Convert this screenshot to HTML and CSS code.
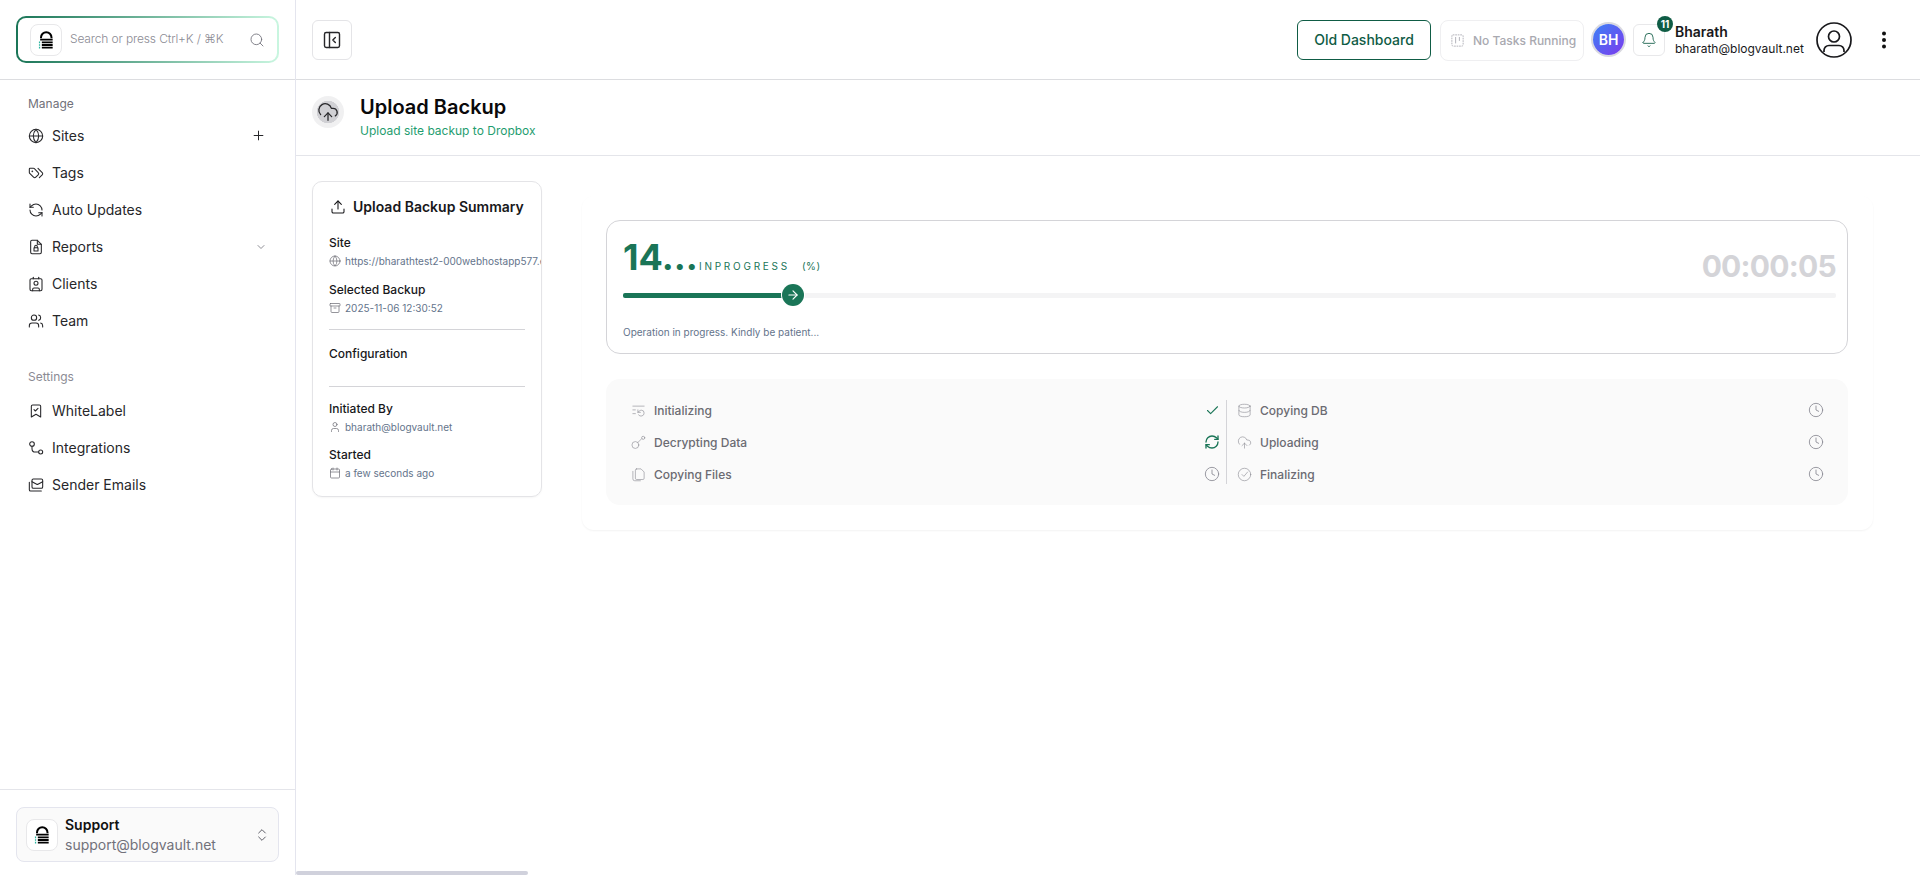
FILE: index.html
```html
<!DOCTYPE html>
<html lang="en">
<head>
<meta charset="utf-8">
<title>Upload Backup</title>
<link rel="stylesheet" href="styles.css">
</head>
<body>
<svg class="sprite" aria-hidden="true">
  <symbol id="logo" viewBox="0 0 24 24">
    <path d="M6 10V9a6.3 6.3 0 0 1 12.600 0v1" fill="none" stroke="#000" stroke-width="2.400"/>
    <path d="M5 11.500h15M7 14.800h13M7 18h13M7 21.200h13" fill="none" stroke="#000" stroke-width="2.200"/>
    <path d="M3.500 14.800h1.500M3.500 18h1.500M3.500 21.200h1.500" fill="none" stroke="#2bb5a0" stroke-width="2"/>
  </symbol>
  <symbol id="clock" viewBox="0 0 24 24"><circle cx="12" cy="12" r="10"/><path d="M12 6v6l4 2"/></symbol>
</svg>
<div class="app">
  <aside class="sidebar">
    <div class="side-top">
      <div class="search">
        <span class="logo-box"><svg class="logo" width="20" height="20"><use href="#logo"/></svg></span>
        <span class="search-text">Search or press Ctrl+K / ⌘K</span>
        <svg class="ic muted" viewBox="0 0 24 24"><path d="m21 21-4.340-4.340"/><circle cx="11" cy="11" r="8"/></svg>
      </div>
    </div>
    <nav class="side-nav">
      <div class="nav-title">Manage</div>
      <a class="nav-item"><svg class="ic" viewBox="0 0 24 24"><circle cx="12" cy="12" r="10"/><path d="M12 2a14.500 14.500 0 0 0 0 20 14.500 14.500 0 0 0 0-20"/><path d="M2 12h20"/></svg><span>Sites</span><svg class="ic ic-end plus" viewBox="0 0 24 24"><path d="M5 12h14M12 5v14"/></svg></a>
      <a class="nav-item"><svg class="ic" viewBox="0 0 24 24"><path d="m15 5 6.300 6.300a2.400 2.400 0 0 1 0 3.400L17 19"/><path d="M9.586 5.586A2 2 0 0 0 8.172 5H3a1 1 0 0 0-1 1v5.172a2 2 0 0 0 .586 1.414L8.290 18.290a2.426 2.426 0 0 0 3.420 0l3.580-3.580a2.426 2.426 0 0 0 0-3.420z"/><circle cx="6.500" cy="9.500" r=".5"/></svg><span>Tags</span></a>
      <a class="nav-item"><svg class="ic" viewBox="0 0 24 24"><path d="M21 12a9 9 0 0 0-9-9 9.750 9.750 0 0 0-6.740 2.740L3 8"/><path d="M3 3v5h5"/><path d="M3 12a9 9 0 0 0 9 9 9.750 9.750 0 0 0 6.740-2.740L21 16"/><path d="M16 16h5v5"/></svg><span>Auto Updates</span></a>
      <a class="nav-item"><svg class="ic" viewBox="0 0 24 24"><path d="M14 2H6a2 2 0 0 0-2 2v16a2 2 0 0 0 2 2h12a2 2 0 0 0 2-2V8z"/><path d="M14 2v6h6"/><rect x="9" y="13" width="6" height="5"/><path d="M10 13v-1.500a2 2 0 0 1 4 0V13"/></svg><span>Reports</span><svg class="ic ic-end chev" viewBox="0 0 24 24"><path d="m6 9 6 6 6-6"/></svg></a>
      <a class="nav-item"><svg class="ic" viewBox="0 0 24 24"><path d="M16 2v2"/><path d="M7 22v-2a2 2 0 0 1 2-2h6a2 2 0 0 1 2 2v2"/><path d="M8 2v2"/><circle cx="12" cy="11" r="3"/><rect x="3" y="4" width="18" height="18" rx="2"/></svg><span>Clients</span></a>
      <a class="nav-item"><svg class="ic" viewBox="0 0 24 24"><path d="M16 21v-2a4 4 0 0 0-4-4H6a4 4 0 0 0-4 4v2"/><circle cx="9" cy="7" r="4"/><path d="M22 21v-2a4 4 0 0 0-3-3.870"/><path d="M16 3.130a4 4 0 0 1 0 7.750"/></svg><span>Team</span></a>
      <div class="nav-title nav-title-2">Settings</div>
      <a class="nav-item"><svg class="ic" viewBox="0 0 24 24"><path d="m19 21-7-4-7 4V5a2 2 0 0 1 2-2h10a2 2 0 0 1 2 2Z"/><path d="m9 10 2 2 4-4"/></svg><span>WhiteLabel</span></a>
      <a class="nav-item"><svg class="ic" viewBox="0 0 24 24"><circle cx="6" cy="6" r="3.500"/><circle cx="19" cy="18" r="3"/><path d="M6 9.500V13a5 5 0 0 0 5 5h5"/></svg><span>Integrations</span></a>
      <a class="nav-item"><svg class="ic" viewBox="0 0 24 24"><rect x="6" y="3" width="16" height="14" rx="2"/><path d="m22 7-7.100 3.780c-.57.3-1.230.3-1.800 0L6 7"/><path d="M2 8v11c0 1.100.9 2 2 2h16"/></svg><span>Sender Emails</span></a>
    </nav>
    <div class="side-foot">
      <div class="support">
        <span class="logo-box"><svg class="logo" width="20" height="20"><use href="#logo"/></svg></span>
        <div class="support-text"><strong>Support</strong><span>support@blogvault.net</span></div>
        <svg class="ic ic-end updown" viewBox="0 0 24 24"><path d="m7 15 5 5 5-5"/><path d="m7 9 5-5 5 5"/></svg>
      </div>
    </div>
  </aside>

  <main class="main">
    <header class="topbar">
      <button class="toggle"><svg class="ic ic-20" viewBox="0 0 24 24"><rect x="3" y="3" width="18" height="18" rx="2"/><path d="M9 3v18"/><path d="m16 15-3-3 3-3"/></svg></button>
      <div class="top-right">
        <button class="old-dash">Old Dashboard</button>
        <div class="tasks"><svg class="ic ic-15 dash" viewBox="0 0 24 24"><rect x="3" y="3" width="18" height="18" rx="2" stroke-dasharray="1.500 2.500"/><path d="M9 7v9M15 7v5"/></svg><span>No Tasks Running</span></div>
        <div class="avatar">BH</div>
        <div class="bell"><svg class="ic bell-ic" viewBox="0 0 24 24"><path d="M10.268 21a2 2 0 0 0 3.464 0"/><path d="M3.262 15.326A1 1 0 0 0 4 17h16a1 1 0 0 0 .74-1.673C19.410 13.956 18 12.499 18 8A6 6 0 0 0 6 8c0 4.499-1.411 5.956-2.738 7.326"/></svg><span class="badge">11</span></div>
        <div class="who"><strong>Bharath</strong><span>bharath@blogvault.net</span></div>
        <svg class="profile" viewBox="0 0 36 36"><circle cx="18" cy="18" r="17"/><circle cx="18" cy="14.500" r="5.500"/><path d="M8 30v-1.500a5 5 0 0 1 5-5h10a5 5 0 0 1 5 5V30"/></svg>
        <svg class="kebab" viewBox="0 0 4 18"><circle cx="2" cy="2.500" r="2"/><circle cx="2" cy="9" r="2"/><circle cx="2" cy="15.500" r="2"/></svg>
      </div>
    </header>

    <section class="page-head">
      <span class="head-ic"><svg class="ic ic-22 dark" viewBox="0 0 24 24"><path d="M12 13v8"/><path d="M4 14.899A7 7 0 1 1 15.710 8h1.790a4.500 4.500 0 0 1 2.500 8.242"/><path d="m8 17 4-4 4 4"/></svg></span>
      <div>
        <h1>Upload Backup</h1>
        <p>Upload site backup to Dropbox</p>
      </div>
    </section>

    <section class="content">
      <aside class="summary">
        <h2><svg class="ic" viewBox="0 0 24 24"><path d="M21 15v4a2 2 0 0 1-2 2H5a2 2 0 0 1-2-2v-4"/><path d="M17 8l-5-5-5 5"/><path d="M12 3v12"/></svg>Upload Backup Summary</h2>
        <div class="field">
          <h3>Site</h3>
          <p><svg class="ic ic-12" viewBox="0 0 24 24"><circle cx="12" cy="12" r="10"/><path d="M12 2a14.500 14.500 0 0 0 0 20 14.500 14.500 0 0 0 0-20"/><path d="M2 12h20"/></svg>https://bharathtest2-000webhostapp577.e</p>
        </div>
        <div class="field field-b">
          <h3>Selected Backup</h3>
          <p><svg class="ic ic-12" viewBox="0 0 24 24"><rect x="2" y="3" width="20" height="5" rx="1"/><path d="M4 8v11a2 2 0 0 0 2 2h12a2 2 0 0 0 2-2V8"/><path d="M10 12h4"/></svg>2025-11-06 12:30:52</p>
        </div>
        <hr class="rule rule-1">
        <h3 class="config">Configuration</h3>
        <hr class="rule rule-2">
        <div class="field">
          <h3>Initiated By</h3>
          <p><svg class="ic ic-12" viewBox="0 0 24 24"><path d="M19 21v-2a4 4 0 0 0-4-4H9a4 4 0 0 0-4 4v2"/><circle cx="12" cy="7" r="4"/></svg>bharath@blogvault.net</p>
        </div>
        <div class="field field-c">
          <h3>Started</h3>
          <p><svg class="ic ic-12" viewBox="0 0 24 24"><path d="M8 2v4"/><path d="M16 2v4"/><rect x="3" y="4" width="18" height="18" rx="2"/><path d="M3 10h18"/></svg>a few seconds ago</p>
        </div>
      </aside>

      <div class="panel">
        <div class="progress-card">
          <div class="prog-top">
            <span class="pct">14...</span>
            <span class="state">INPROGRESS</span>
            <span class="unit">(%)</span>
            <span class="timer">00:00:05</span>
          </div>
          <div class="track">
            <div class="fill" style="width:170px"></div>
            <span class="knob"><svg class="ic ic-14 white" viewBox="0 0 24 24"><path d="M5 12h14"/><path d="m12 5 7 7-7 7"/></svg></span>
          </div>
          <p class="note">Operation in progress. Kindly be patient...</p>
        </div>
        <div class="steps">
          <ul class="col col-l">
            <li><svg class="ic ic-15" viewBox="0 0 24 24"><path d="M21 5H3"/><path d="M7 11H3"/><path d="M7 17H3"/><path d="M12 19a5 5 0 0 0 9-3 4.500 4.500 0 0 0-4.500-4.500c-1.330 0-2.540.54-3.410 1.410L11 15"/><path d="M11 11v4h4"/></svg><span>Initializing</span><svg class="ic ic-15 ok" viewBox="0 0 24 24"><path d="M20 6 9 17l-5-5"/></svg></li>
            <li><svg class="ic ic-15" viewBox="0 0 24 24"><circle cx="7" cy="16" r="5.500"/><path d="m11 12 6-6"/><circle cx="19.500" cy="4.500" r="2.500"/></svg><span>Decrypting Data</span><svg class="ic ic-16 ok spin" viewBox="0 0 24 24"><path d="M3 12a9 9 0 0 1 9-9 9.750 9.750 0 0 1 6.740 2.740L21 8"/><path d="M21 3v5h-5"/><path d="M21 12a9 9 0 0 1-9 9 9.750 9.750 0 0 1-6.740-2.740L3 16"/><path d="M8 16H3v5"/></svg></li>
            <li><svg class="ic ic-15" viewBox="0 0 24 24"><path d="M9 3h7l5 5v10a2 2 0 0 1-2 2H9a2 2 0 0 1-2-2V5a2 2 0 0 1 2-2z"/><path d="M3 7v12a3 3 0 0 0 3 3h9"/></svg><span>Copying Files</span><svg class="ic ic-16 soft"><use href="#clock"/></svg></li>
          </ul>
          <ul class="col col-r">
            <li><svg class="ic ic-15" viewBox="0 0 24 24"><ellipse cx="12" cy="5" rx="9" ry="3"/><path d="M3 5v14a9 3 0 0 0 18 0V5"/><path d="M3 12a9 3 0 0 0 18 0"/></svg><span>Copying DB</span><svg class="ic ic-16 soft"><use href="#clock"/></svg></li>
            <li><svg class="ic ic-15" viewBox="0 0 24 24"><path d="M12 13v8"/><path d="M4 14.899A7 7 0 1 1 15.710 8h1.790a4.500 4.500 0 0 1 2.500 8.242"/><path d="m8 17 4-4 4 4"/></svg><span>Uploading</span><svg class="ic ic-16 soft"><use href="#clock"/></svg></li>
            <li><svg class="ic ic-15" viewBox="0 0 24 24"><circle cx="12" cy="12" r="10"/><path d="m8 12 3 3 6-7"/></svg><span>Finalizing</span><svg class="ic ic-16 soft"><use href="#clock"/></svg></li>
          </ul>
        </div>
      </div>
    </section>
    <div class="hscroll"></div>
  </main>
</div>
</body>
</html>
```

FILE: styles.css
```css
* { box-sizing: border-box; }
html, body { margin: 0; height: 100%; overflow: hidden; }
body { font-family: Inter, "Liberation Sans", sans-serif; color: #18181b; background: #fff; }
.sprite { position: absolute; width: 0; height: 0; }
h1, h2, h3, p, ul { margin: 0; padding: 0; }
ul { list-style: none; }
button { font-family: inherit; cursor: pointer; }

.ic { width: 16px; height: 16px; flex: none; fill: none; stroke: currentColor; stroke-width: 1.6; stroke-linecap: round; stroke-linejoin: round; }
.ic-12 { width: 12px; height: 12px; stroke-width: 1.5; }
.ic-14 { width: 14px; height: 14px; stroke-width: 2; }
.ic-15 { width: 15px; height: 15px; stroke-width: 1.3; }
.ic-16 { width: 16px; height: 16px; }
.ic-20 { width: 20px; height: 20px; stroke-width: 1.7; }
.ic-22 { width: 22px; height: 22px; }
.logo { display: block; }

.app { display: flex; height: 875px; }

/* Sidebar */
.sidebar { width: 296px; flex: none; display: flex; flex-direction: column; border-right: 1px solid #e4e5ee; }
.side-top { height: 80px; padding: 16px 16px 0; border-bottom: 1px solid #dcdde0; }
.search { height: 47px; width: 263px; display: flex; align-items: center; gap: 8px; padding: 0 12px; border: 2px solid transparent; border-radius: 10px; background: linear-gradient(#fff, #fff) padding-box, linear-gradient(90deg, #1a7557, #c9f6e0) border-box; }
.logo-box { width: 32px; height: 32px; flex: none; display: flex; align-items: center; justify-content: center; border: 1px solid #e8e8ea; border-radius: 8px; background: #fff; }
.search-text { flex: 1; padding-bottom: 2px; font-size: 12px; letter-spacing: -.14px; color: #8b8b94; white-space: nowrap; font-weight: 300; }
.muted { color: #71717a; stroke-width: 1.3; }
.side-nav { flex: 1; padding: 15px 0 0 28px; }
.nav-title { height: 18px; line-height: 18px; font-size: 12px; color: #71717a; margin-bottom: 4px; }
.nav-title-2 { margin-top: 29px; margin-bottom: 6px; color: #8b8b94; }
.nav-item { height: 37px; display: flex; align-items: center; gap: 8px; font-size: 14px; color: #27272a; padding-right: 29px; }
.nav-item .ic { color: #27272a; }
.ic-end { margin-left: auto; }
.nav-item .plus { width: 15px; height: 15px; }
.nav-item .chev { width: 12px; height: 12px; color: #71717a; margin-right: -1px; }
.side-foot { height: 86px; border-top: 1px solid #e4e5ea; padding: 17px 16px 0; }
.support { height: 55px; display: flex; align-items: center; gap: 7px; padding: 0 9px; border: 1px solid #e4e5ee; border-radius: 8px; background: #fafafa; }
.support-text { display: flex; flex-direction: column; font-size: 14px; line-height: 20px; }
.support-text strong { font-size: 14px; font-weight: 600; color: #111; }
.support-text span { color: #71717a; }
.updown { color: #52525b; stroke-width: 1.4; margin-right: -1px; }

/* Main */
.main { flex: 1; min-width: 0; display: flex; flex-direction: column; position: relative; }
.topbar { height: 80px; flex: none; display: flex; align-items: center; padding: 0 0 0 16px; border-bottom: 1px solid #dcdde0; }
.toggle { width: 40px; height: 40px; display: flex; align-items: center; justify-content: center; padding: 0; background: #fff; color: #27272a; border: 1px solid #e4e4e7; border-radius: 6px; }
.top-right { margin-left: auto; display: flex; align-items: center; }
.old-dash { width: 134px; height: 40px; padding: 0; background: #fff; color: #0f5c45; font-size: 14px; font-weight: 500; border: 1px solid #0f5c45; border-radius: 6px; }
.tasks { width: 144px; height: 41px; margin-left: 9px; display: flex; align-items: center; gap: 8px; padding-left: 9px; border: 1px solid #efeff1; border-radius: 8px; font-size: 12px; font-weight: 500; color: #a9a9b0; white-space: nowrap; margin-top: 1px; }
.dash { color: #b4b4bb; stroke-width: 1.6; }
.avatar { width: 31px; height: 31px; margin-left: 9px; display: flex; align-items: center; justify-content: center; border-radius: 50%; background: linear-gradient(135deg, #3b82f6, #7c3aed); box-shadow: 0 0 0 2px #d9d9e0; color: #fff; font-size: 14px; font-weight: 600; }
.bell { position: relative; width: 32px; height: 32px; margin-left: 9px; margin-top: 1px; display: flex; align-items: center; justify-content: center; border: 1px solid #e8e8ea; border-radius: 6px; }
.bell-ic { color: #0f5c45; stroke-width: 1.3; }
.badge { position: absolute; top: -9px; right: -9px; width: 16px; height: 16px; display: flex; align-items: center; justify-content: center; border-radius: 50%; background: #0f5c45; color: #fff; font-size: 10px; font-weight: 700; }
.who { margin-left: 10px; width: 141px; display: flex; flex-direction: column; font-size: 12px; line-height: 16px; color: #18181b; margin-top: 1px; }
.who strong { font-size: 14px; font-weight: 600; line-height: 18px; }
.profile { width: 36px; height: 36px; fill: none; stroke: #18181b; stroke-width: 1.7; }
.kebab { width: 4px; height: 18px; margin-left: 30px; margin-right: 34px; fill: #111; }

.page-head { height: 76px; flex: none; display: flex; align-items: center; padding: 0 0 3px 16px; gap: 16px; border-bottom: 1px solid #e4e5ea; }
.head-ic { width: 32px; height: 32px; margin-bottom: 9px; display: flex; align-items: center; justify-content: center; border-radius: 50%; background: radial-gradient(circle, #d0d0d4 0 11px, #f0f0f1 11.500px); }
.dark { color: #27272a; stroke-width: 1.4; }
.page-head h1 { font-size: 20px; font-weight: 600; line-height: 28px; color: #09090b; }
.page-head p { margin-top: 2px; font-size: 12px; line-height: 16px; color: #1f9d6f; }

.content { flex: 1; display: flex; align-items: flex-start; padding: 25px 0 0 16px; }
.summary { width: 230px; height: 316px; flex: none; padding: 15px 0 0 16px; border: 1px solid #e4e4e7; border-radius: 10px; overflow: hidden; box-shadow: 0 1px 2px rgba(0,0,0,.04); }
.summary h2 { display: flex; align-items: center; gap: 7px; font-size: 14px; font-weight: 600; line-height: 20px; color: #18181b; padding-left: 1px; margin-bottom: 18px; white-space: nowrap; }
.summary h3 { font-size: 12px; font-weight: 500; line-height: 16px; color: #18181b; white-space: nowrap; }
.summary p { display: flex; align-items: center; gap: 4px; font-size: 10px; line-height: 14px; margin-top: 3px; color: #64748b; white-space: nowrap; }
.summary p .ic { color: #71717a; }
.field-b { margin-top: 14px; }
.field-c { margin-top: 13px; }
.rule { width: 196px; margin: 0; border: 0; border-top: 1px solid #d4d4d8; }
.rule-1 { margin-top: 14px; }
.config { margin-top: 16px; }
.rule-2 { margin-top: 24px; margin-bottom: 14px; }

.panel { width: 1291px; height: 334px; margin-left: 40px; margin-top: 15px; padding: 24px 25px 0 24px; border-radius: 12px; box-shadow: 0 1px 2px rgba(0,0,0,.05); }
.progress-card { height: 134px; padding: 15px 11px 0 16px; border: 1px solid #d4d4d8; border-radius: 14px; }
.prog-top { height: 48px; display: flex; align-items: flex-end; }
.pct { font-size: 36px; line-height: 44px; margin-bottom: 5px; font-weight: 700; color: #1a7557; width: 76px; white-space: nowrap; }
.state { font-size: 10px; line-height: 16px; letter-spacing: 2.75px; color: #1a7557; margin-bottom: 10px; }
.unit { font-size: 10px; line-height: 16px; letter-spacing: .5px; color: #1a7557; margin-left: 12px; margin-bottom: 10px; }
.timer { margin-left: auto; font-size: 30px; line-height: 36px; letter-spacing: -.75px; font-weight: 700; color: #d4d4d8; }
.track { position: relative; height: 5px; margin-top: 9px; background: #f4f4f5; border-radius: 2px; }
.fill { height: 5px; background: #1a7557; border-radius: 2px; }
.knob { position: absolute; left: 159px; top: -9px; width: 22px; height: 22px; display: flex; align-items: center; justify-content: center; border-radius: 50%; background: #1a7557; box-shadow: 0 0 0 1px #fff; }
.white { color: #fff; }
.note { margin-top: 27px; font-size: 10px; line-height: 14px; color: #64748b; }

.steps { height: 126px; margin-top: 25px; padding: 21px 0; display: flex; background: #fafafa; border-radius: 14px; }
.col { display: flex; flex-direction: column; justify-content: space-between; }
.col-l { width: 621px; padding: 0 6px 0 25px; border-right: 1px solid #d4d4d8; }
.col-r { flex: 1; padding: 0 24px 0 10px; }
.col li { height: 20px; display: flex; align-items: center; gap: 8px; font-size: 12px; font-weight: 500; color: #6b6b72; }
.col li > span { flex: 1; }
.col li > .ic:first-child { color: #8b8b94; stroke-width: 1; }
.ok { color: #1a7557; stroke-width: 1.7; }
.spin { stroke-width: 2; }
.col li > .soft { color: #8b8b94; stroke-width: 1.3; }
.hscroll { position: absolute; left: 0; bottom: 0; width: 232px; height: 4px; background: #d0d1dc; border-radius: 2px; }
```
